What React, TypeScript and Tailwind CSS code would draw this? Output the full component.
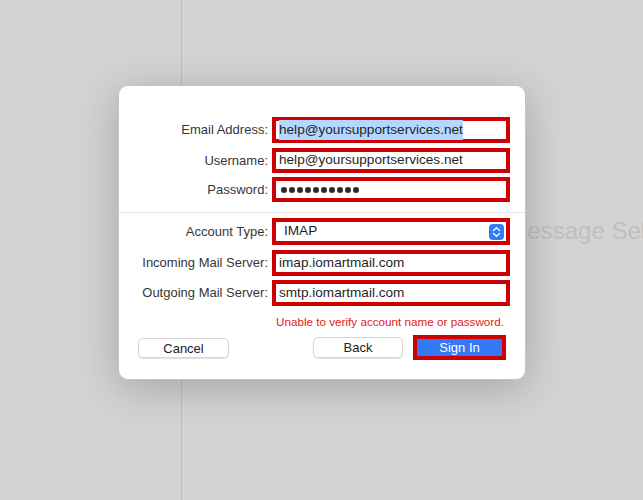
import React from "react"

const font = { fontFamily: '"Liberation Sans", Arial, sans-serif' }

function Field({
  label,
  h,
  mt,
  children,
}: {
  label: string
  h: string
  mt: string
  children: React.ReactNode
}) {
  return (
    <div className={`flex items-center ${mt}`}>
      <div className="w-[150px] text-right text-[13px] text-[#363636] pr-[1px]">{label}</div>
      <div
        className={`ml-[3px] w-[238px] ${h} border-4 border-[#cc0000] bg-white flex items-center pl-[3px] pr-[2px] text-[13.6px] text-[#1f1f1f] whitespace-nowrap`}
      >
        {children}
      </div>
    </div>
  )
}

function Stepper() {
  return (
    <div className="ml-auto w-[15px] h-[16px] rounded-[4px] bg-[#2f7cf6] flex items-center justify-center">
      <svg width="9" height="12" viewBox="0 0 9 12" fill="none">
        <path d="M1.5 4.5 L4.5 1.8 L7.5 4.5" stroke="white" strokeWidth="1.4" strokeLinecap="round" strokeLinejoin="round" />
        <path d="M1.5 7.5 L4.5 10.2 L7.5 7.5" stroke="white" strokeWidth="1.4" strokeLinecap="round" strokeLinejoin="round" />
      </svg>
    </div>
  )
}

export default function App() {
  return (
    <div className="relative w-[643px] h-[500px] overflow-hidden bg-[#d3d3d3] flex" style={font}>
      <div className="w-[182px] h-full border-r border-[#bdbdbd]" />
      <div className="relative flex-1 h-full">
        <div className="absolute left-[288px] top-[219px] text-[24px] leading-[24px] text-[#bfbfbf] whitespace-nowrap">
          No Message Selected
        </div>
      </div>

      {/* sheet */}
      <div className="absolute left-[118px] top-[85px] w-[408px] h-[295px] bg-white rounded-[10px] border border-[#c4c4c4] shadow-[0_8px_40px_rgba(0,0,0,0.22)] flex flex-col">
        <div className="pt-[31px]">
          <Field label="Email Address:" h="h-[26px]" mt="mt-0">
            <span className="bg-[#b3d7ff]">help@yoursupportservices.net</span>
          </Field>
          <Field label="Username:" h="h-[25px]" mt="mt-[5px]">
            help@yoursupportservices.net
          </Field>
          <Field label="Password:" h="h-[25px]" mt="mt-[4px]">
            <div className="flex gap-[2px] pl-[2px]">
              {Array.from({ length: 10 }).map((_, i) => (
                <span key={i} className="w-[6px] h-[6px] rounded-full bg-[#2a2a2a]" />
              ))}
            </div>
          </Field>
        </div>

        <div className="mt-[10px] h-px bg-[#e3e3e3]" />

        <div>
          <Field label="Account Type:" h="h-[27px]" mt="mt-[5px]">
            <span className="pl-[5px]">IMAP</span>
            <Stepper />
          </Field>
          <Field label="Incoming Mail Server:" h="h-[26px]" mt="mt-[5px]">
            imap.iomartmail.com
          </Field>
          <Field label="Outgoing Mail Server:" h="h-[26px]" mt="mt-[4px]">
            smtp.iomartmail.com
          </Field>
        </div>

        <div className="mt-[9px] pr-[21px] text-right text-[11.7px] leading-[14px] text-[#e0231b]">
          Unable to verify account name or password.
        </div>

        <div className="mt-[6px] px-[19px] flex items-center h-[25px]">
          <button className="w-[91px] h-[20px] rounded-[5px] bg-white border border-[#d6d6d6] shadow-[0_1px_1px_rgba(0,0,0,0.12)] text-[13px] text-[#222]">
            Cancel
          </button>
          <div className="flex-1" />
          <button className="w-[90px] h-[21px] rounded-[5px] bg-white border border-[#d6d6d6] shadow-[0_1px_1px_rgba(0,0,0,0.12)] text-[13px] text-[#222]">
            Back
          </button>
          <div className="ml-[10px] w-[93px] h-[25px] border-4 border-[#cc0000] bg-[#3478f6] flex items-center justify-center text-[13px] text-white">
            Sign In
          </div>
        </div>
      </div>
    </div>
  )
}
